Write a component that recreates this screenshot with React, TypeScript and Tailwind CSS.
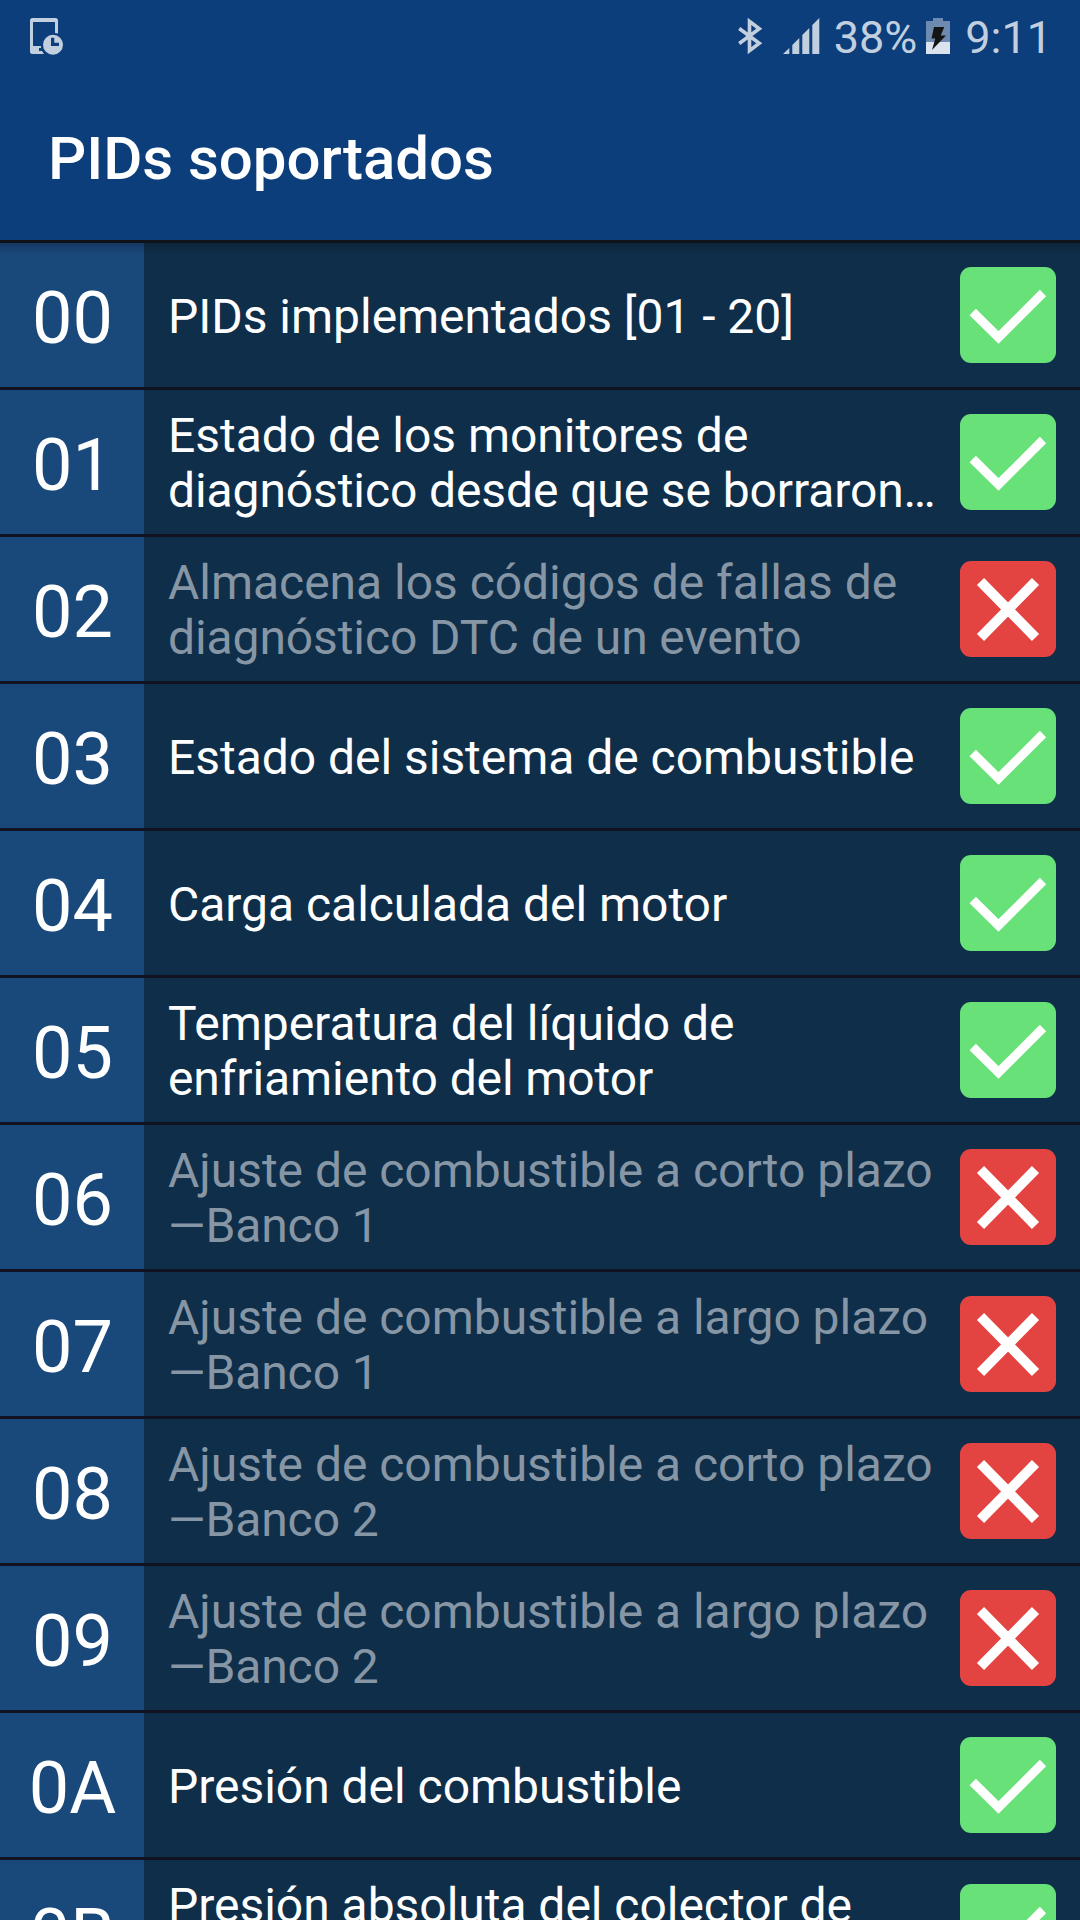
type Pid = {
  id: string;
  label: string;
  supported: boolean;
};

const pids: Pid[] = [
  { id: "00", label: "PIDs implementados [01 - 20]", supported: true },
  {
    id: "01",
    label: "Estado de los monitores de\ndiagnóstico desde que se borraron…",
    supported: true,
  },
  {
    id: "02",
    label: "Almacena los códigos de fallas de\ndiagnóstico DTC de un evento",
    supported: false,
  },
  { id: "03", label: "Estado del sistema de combustible", supported: true },
  { id: "04", label: "Carga calculada del motor", supported: true },
  {
    id: "05",
    label: "Temperatura del líquido de\nenfriamiento del motor",
    supported: true,
  },
  {
    id: "06",
    label: "Ajuste de combustible a corto plazo\n—Banco 1",
    supported: false,
  },
  {
    id: "07",
    label: "Ajuste de combustible a largo plazo\n—Banco 1",
    supported: false,
  },
  {
    id: "08",
    label: "Ajuste de combustible a corto plazo\n—Banco 2",
    supported: false,
  },
  {
    id: "09",
    label: "Ajuste de combustible a largo plazo\n—Banco 2",
    supported: false,
  },
  { id: "0A", label: "Presión del combustible", supported: true },
  {
    id: "0B",
    label: "Presión absoluta del colector de\nadmisión",
    supported: true,
  },
];

function ScheduledIcon() {
  return (
    <svg className="overflow-visible" width="33" height="36" viewBox="0 0 33 36" fill="#c2cfdf">
      <path d="M2.500 0H25.500A2.500 2.500 0 0 1 28 2.500V15.500L25 15V4H3V28H11V30H9V33H12L14 36H2.500A2.500 2.500 0 0 1 0 33.500V2.500A2.500 2.500 0 0 1 2.500 0Z" />
      <path
        fillRule="evenodd"
        d="M23 16.700a10 10 0 1 1 0 20a10 10 0 0 1 0-20ZM21 19.700V28H29V24.700H24.300V19.700Z"
      />
    </svg>
  );
}

function BluetoothIcon() {
  return (
    <svg className="overflow-visible" width="24" height="36" viewBox="0 0 24 36" fill="none">
      <path
        d="M1.200 10.500L21.300 25.300L11.500 32.600V3.400L21.300 10.700L1.200 25.500"
        stroke="#c2cfdf"
        strokeWidth="3.600"
      />
    </svg>
  );
}

function SignalIcon() {
  return (
    <svg width="37" height="36" viewBox="0 0 37 36" fill="#c2cfdf">
      <path d="M0 36L6.300 30V36ZM9.300 27L16.300 20V36H9.300ZM19.300 17L26.300 10V36H19.300ZM29.300 7L36.300 0V36H29.300Z" />
    </svg>
  );
}

function BatteryIcon() {
  return (
    <svg width="24" height="36" viewBox="0 0 24 36">
      <path d="M7 0H17V3H24V24H0V3H7Z" fill="#6d8bb1" />
      <path d="M0 24H24V36H0Z" fill="#dbe3ee" />
      <path d="M8 9H18.300L14.700 17.500H20L6 32L9.300 20.500H5.500Z" fill="#141414" />
    </svg>
  );
}

function StatusBar() {
  return (
    <div className="flex h-[72px] items-center pl-[30px] pr-[28px] text-[45px] leading-none text-[#c2cfdf]">
      <ScheduledIcon />
      <div className="ml-auto flex items-center">
        <BluetoothIcon />
        <div className="ml-[21px]">
          <SignalIcon />
        </div>
        <span className="ml-[14px] pt-[2px]">38%</span>
        <div className="ml-[9px]">
          <BatteryIcon />
        </div>
        <span className="ml-[15px] pt-[2px]">9:11</span>
      </div>
    </div>
  );
}

function SupportBadge({ supported }: { supported: boolean }) {
  return (
    <svg className="size-24 shrink-0" viewBox="0 0 96 96" fill="none">
      <rect width="96" height="96" rx="11" fill={supported ? "#68e178" : "#e44441"} />
      <path
        d={supported ? "M12.700 45L38.500 70.500L83 26" : "M20.500 20.500L75.500 76.500M75.500 20.500L20.500 76.500"}
        stroke="white"
        strokeWidth={supported ? 9 : 10}
      />
    </svg>
  );
}

function PidRow({ id, label, supported }: Pid) {
  return (
    <li className="flex h-[147px] border-b-[3px] border-[#111322] bg-[#0f2e4a]">
      <div className="flex w-36 shrink-0 items-center justify-center bg-[#19487b] pt-[7px] pl-px text-[72px] leading-none text-white">
        {id}
      </div>
      <div className="flex flex-1 items-center px-6">
        <p
          className={`w-[792px] whitespace-pre pt-[2px] text-[48px] leading-[55px] tracking-[-0.1px] first-line:tracking-[-0.03px] ${
            supported ? "text-white" : "text-[#8796a5]"
          }`}
        >
          {label}
        </p>
        <SupportBadge supported={supported} />
      </div>
    </li>
  );
}

export default function App() {
  return (
    <main className="h-[1920px] w-[1080px] overflow-hidden bg-[#0f2e4a] font-['Roboto',sans-serif]">
      <header className="h-[243px] border-b-[3px] border-[#111118] bg-[#0c3e7b]">
        <StatusBar />
        <div className="flex h-[168px] items-center px-12 pt-[5px]">
          <h1 className="text-[60px] font-medium leading-none tracking-[-0.06px] text-white">
            PIDs soportados
          </h1>
        </div>
      </header>
      <div className="relative">
        <div className="absolute inset-x-0 top-0 h-3 bg-gradient-to-b from-black/20 to-transparent" />
        <ul>
          {pids.map((pid) => (
            <PidRow key={pid.id} {...pid} />
          ))}
        </ul>
      </div>
    </main>
  );
}
